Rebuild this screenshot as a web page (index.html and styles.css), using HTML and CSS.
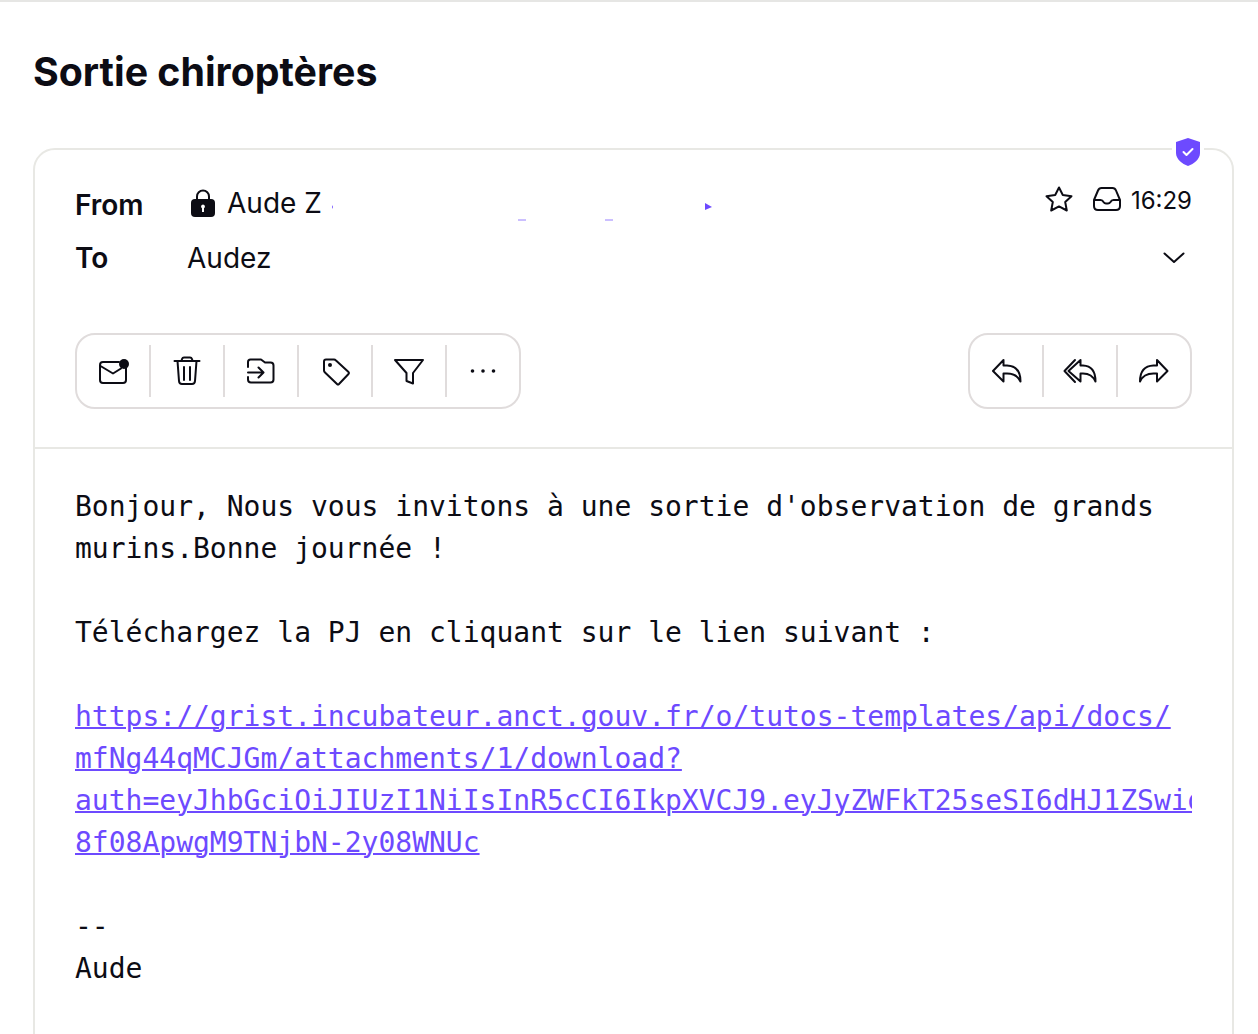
FILE: index.html
```html
<!DOCTYPE html>
<html lang="fr">
<head>
<meta charset="utf-8">
<title>Sortie chiroptères</title>
<link rel="stylesheet" href="styles.css">
</head>
<body>
<main class="page">
  <h1 class="subject">Sortie chiroptères</h1>
  <article class="card">
    <span class="badge">
      <svg class="shield" width="24" height="28" viewBox="1 1 24 28"><path d="M13 1 L25 5 V16 C25 22 19 27 13 29 C7 27 1 22 1 16 V5 Z"/><path class="shield-check" d="M8.500 15 L11.500 18 L17.500 12"/></svg>
    </span>
    <header class="head">
      <div class="meta">
        <div class="row row-from">
          <span class="label">From</span>
          <span class="value">
            <svg class="lock" width="24" height="28" viewBox="0 0 24 28"><path class="lock-bow" d="M6 11 V7.500 A6 6 0 0 1 18 7.500 V11"/><rect x="0" y="10" width="24" height="18" rx="4"/><path class="lock-hole" d="M12 15.500 a2 2 0 0 1 1 3.700 V23 h-2 v-3.800 a2 2 0 0 1 1 -3.700z"/></svg>
            <span class="name">Aude Z</span>
            <svg class="redacted" width="382" height="24" viewBox="0 0 382 24"><path d="M1 4 V8 L0 6Z M373 2 L380 6 L373 9Z"/><path class="redacted-line" d="M186 19 h8 M273 19 h8"/></svg>
          </span>
          <span class="right">
            <svg class="ico star" width="28" height="26" viewBox="0 0 28 26"><path d="M14 1.500 L17.800 9 L26.500 10.200 L20.200 16 L21.800 24.500 L14 20.400 L6.200 24.500 L7.800 16 L1.500 10.200 L10.200 9 Z"/></svg>
            <svg class="ico inbox" width="28" height="24" viewBox="0 0 28 24"><path d="M1 13 L5 3.500 Q6 1 8.500 1 H19.500 Q22 1 23 3.500 L27 13 V19 Q27 23 23 23 H5 Q1 23 1 19 Z M1 13 H7.500 Q9.500 13 10.500 15 Q11.500 16.500 13 16.500 H15 Q16.500 16.500 17.500 15 Q18.500 13 20.500 13 H27"/></svg>
            <span class="time">16:29</span>
          </span>
        </div>
        <div class="row row-to">
          <span class="label">To</span>
          <span class="value">Audez</span>
          <span class="right-plain">
            <svg class="ico chev" width="22" height="12" viewBox="0 0 22 12"><path d="M1.500 1.500 L11 10 L20.500 1.500"/></svg>
          </span>
        </div>
      </div>
      <div class="toolbar">
        <div class="group">
          <button class="tool" type="button"><svg class="ico" width="36" height="36" viewBox="0 0 36 36"><path d="M24 9 H8 Q5 9 5 12 V27 Q5 30 8 30 H28 Q31 30 31 27 V15"/><path d="M5.500 13 L18 20.500 L26 15.500"/><circle class="solid" cx="29" cy="11" r="5"/></svg></button>
          <button class="tool" type="button"><svg class="ico" width="36" height="36" viewBox="0 0 36 36"><path d="M5.500 8 H30.500 M12.500 8 L13 6 Q13.500 4.500 15 4.500 H21 Q22.500 4.500 23 6 L23.500 8 M8.500 8 L10 28 Q10.200 31 13 31 H23 Q25.800 31 26 28 L27.500 8 M15 14 V27 M21 14 V27"/></svg></button>
          <button class="tool" type="button"><svg class="ico" width="36" height="36" viewBox="0 0 36 36"><path d="M5 14 V9 Q5 6.500 7.500 6.500 H18 L22 9.500 H27.500 Q30.500 9.500 30.500 12.500 V26.500 Q30.500 29.500 27.500 29.500 H8 Q5 29.500 5 26.500 V24"/><path d="M5 19.500 H20 M15.500 14.500 L20.500 19.500 L15.500 24.500"/></svg></button>
          <button class="tool" type="button"><svg class="ico" width="36" height="36" viewBox="0 0 36 36"><path d="M7 8.500 Q7 6.500 9 6.500 H17 Q18 6.500 19 7.500 L31.500 19 Q32.500 20 31.500 21 L22 31 Q21 32 20 31 L8 19.500 Q7 18.500 7 17.500 Z"/><circle class="solid" cx="13" cy="12" r="2"/></svg></button>
          <button class="tool" type="button"><svg class="ico" width="36" height="36" viewBox="0 0 36 36"><path d="M4 7 H32 L22 20 V30.500 L15.500 28 V20 Z"/></svg></button>
          <button class="tool" type="button"><svg class="ico" width="36" height="36" viewBox="0 0 36 36"><circle class="solid" cx="7.500" cy="18" r="1.800"/><circle class="solid" cx="18" cy="18" r="1.800"/><circle class="solid" cx="28.500" cy="18" r="1.800"/></svg></button>
        </div>
        <div class="group">
          <button class="tool" type="button"><svg class="ico" width="36" height="36" viewBox="0 0 36 36"><path d="M5 18 L15.500 7 V12.500 H19 Q32.500 13 32.500 28.500 Q29 20.500 19 20.500 H15.500 V28.500 Z"/></svg></button>
          <button class="tool" type="button"><svg class="ico" width="36" height="36" viewBox="0 0 36 36"><path d="M6.500 18 L18.500 7 V12.500 H21 Q33.500 13 33.500 28.500 Q30 20.500 21 20.500 H18.500 V28.500 Z"/><path d="M13 7 L2.500 18 L13 29"/></svg></button>
          <button class="tool" type="button"><svg class="ico" width="36" height="36" viewBox="0 0 36 36"><path d="M31.500 18 L21 7 V12.500 H17.500 Q4 13 4 28.500 Q7.500 20.500 17.500 20.500 H21 V28.500 Z"/></svg></button>
        </div>
      </div>
    </header>
    <pre class="message">Bonjour, Nous vous invitons à une sortie d'observation de grands
murins.Bonne journée !

Téléchargez la PJ en cliquant sur le lien suivant :

<a href="#">https://grist.incubateur.anct.gouv.fr/o/tutos-templates/api/docs/
mfNg44qMCJGm/attachments/1/download?
auth=eyJhbGciOiJIUzI1NiIsInR5cCI6IkpXVCJ9.eyJyZWFkT25seSI6dHJ1ZSwidG9jSWQiOiJt
8f08ApwgM9TNjbN-2y08WNUc</a>

--
Aude</pre>
  </article>
</main>
</body>
</html>
```
FILE: styles.css
```css
* { box-sizing: border-box; }
html, body { margin: 0; height: 100%; overflow: hidden; background: #fff; }
body { font-family: Inter, "Liberation Sans", sans-serif; color: #0c0c14; }
.page { border-top: 2px solid #e6e6e4; padding: 46px 24px 0 33px; height: 1034px; overflow: hidden; }
.subject { margin: 0 0 52px; font-size: 39.3px; line-height: 48px; font-weight: 700; }
.card { position: relative; border: 2px solid #e8e8e4; border-radius: 22px; height: 1000px; }
.badge { position: absolute; top: -13px; right: 28px; width: 32px; height: 30px; background: #fff; display: flex; justify-content: center; }
.shield { fill: #6d4aff; margin-top: 1px; }
.shield-check { fill: none; stroke: #fff; stroke-width: 2; stroke-linecap: round; stroke-linejoin: round; }
.head { padding: 32px 40px 38px; border-bottom: 2px solid #e8e8e4; }
.row { display: flex; align-items: center; font-size: 28px; }
.row-from { height: 44px; }
.row-to { height: 44px; margin-top: 10px; }
.label { width: 112px; font-weight: 600; flex: none; }
.row-from .label { margin-top: 2px; }
.value { display: flex; align-items: center; }
.row-from .value { margin-bottom: 2px; }
.lock { margin: 0 12px 0 4px; fill: #0c0c14; }
.lock-bow { fill: none; stroke: #0c0c14; stroke-width: 2; }
.lock-hole { fill: #fff; }
.name { margin-right: 10px; }
.redacted { margin-top: 20px; fill: #6d4aff; }
.redacted-line { fill: none; stroke: #6d4aff; stroke-width: 1; opacity: .7; }
.right { margin-left: auto; margin-bottom: 10px; display: flex; align-items: center; }
.right-plain { margin-left: auto; display: flex; align-items: center; }
.ico { fill: none; stroke: #0c0c14; stroke-width: 2; stroke-linejoin: round; stroke-linecap: round; }
.ico .solid { fill: #0c0c14; stroke: none; }
.star { margin-right: 20px; }
.inbox { margin-right: 10px; }
.time { font-size: 24px; margin-top: 2px; }
.chev { margin-right: 7px; }
.toolbar { display: flex; justify-content: space-between; margin-top: 53px; }
.group { display: flex; height: 76px; padding: 10px 0; border: 2px solid #e0dcdc; border-radius: 20px; }
.tool { width: 74px; height: 52px; padding: 0; margin: 0; border: 0; border-left: 2px solid #e0dcdc; background: none; display: flex; align-items: center; justify-content: center; }
.tool:first-child { width: 72px; border-left: 0; }
.message { margin: 37px 40px 0; width: 1117px; overflow: hidden; font-family: "DejaVu Sans Mono", monospace; font-size: 28px; line-height: 42px; white-space: pre; color: #0c0c14; }
.message a { color: #6d4aff; text-decoration: underline; text-decoration-thickness: 2px; }
```
